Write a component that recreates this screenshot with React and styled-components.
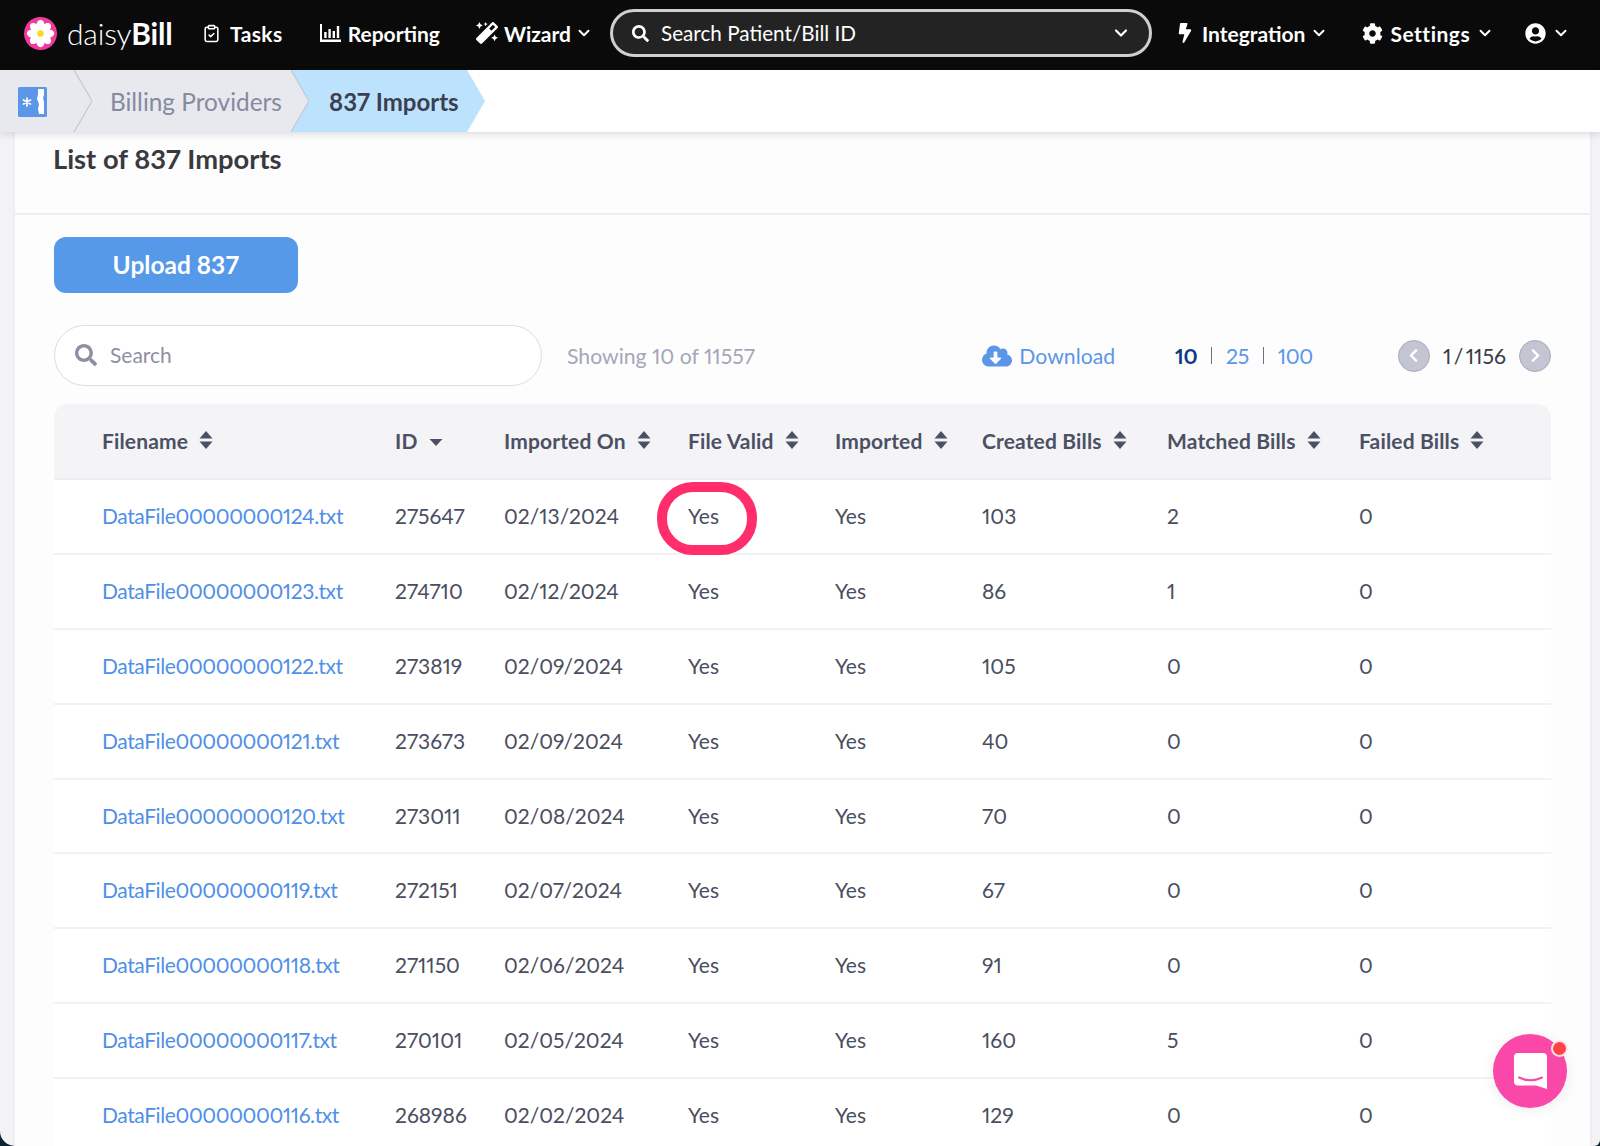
import React from "react";
import styled, { createGlobalStyle } from "styled-components";
import { FaMagic, FaBolt, FaCog, FaUserCircle, FaSearch, FaCloudDownloadAlt, FaChevronLeft, FaChevronRight } from "react-icons/fa";
import { ClipboardCheck, ChevronDown } from "lucide-react";

const Global = createGlobalStyle`
  html, body { margin: 0; padding: 0; background: #0b2332; }
  * { box-sizing: border-box; }
  body { font-family: Lato, "Liberation Sans", sans-serif; font-variant-numeric: proportional-nums; font-feature-settings: "pnum" 1; }
`;
const Shell = styled.div`
  width: 1600px; height: 1146px; overflow: hidden; display: flex; flex-direction: column;
  background: #f3f3f6; border-radius: 0 0 6px 15px;
`;
const Nav = styled.header`
  height: 70px; flex: none; background: #0a0a0a; color: #fff; display: flex; align-items: center; padding-bottom: 4px;
`;
const Logo = styled.div`
  display: flex; align-items: center; gap: 10px; margin-left: 24px; width: 179px; flex: none;
  font-size: 30px; font-weight: 300; letter-spacing: -0.2px;
  b { font-weight: 700; }
`;
const NavItem = styled.div`
  display: flex; align-items: center; font-size: 21px; font-weight: 700; flex: none;
  margin-left: ${p => p.$ml}px; gap: ${p => p.$gap ?? 8}px; letter-spacing: ${p => p.$ls ?? 0}px;
`;
const Chev = styled(ChevronDown)`
  width: 18px; height: 18px; stroke-width: 2.6; margin-left: ${p => p.$ml ?? -2}px;
`;
const SearchBox = styled.div`
  width: 542px; height: 48px; margin-left: 17px; flex: none; background: #232323; border: 3px solid #cfcfcf;
  border-radius: 24px; display: flex; align-items: center; padding: 0 18px 0 19px; font-size: 20.7px; gap: 12px;
  span { flex: 1; }
`;
const Crumbs = styled.nav`
  height: 62px; flex: none; background: #fff; display: flex; position: relative; z-index: 2;
  box-shadow: 0 2px 7px rgba(40,40,60,.16); font-size: 24.4px;
`;
const HomeCrumb = styled.div`
  width: 74px; background: #e8e9ee; padding: 17px 0 0 18px;
`;
const TextCrumb = styled.div`
  display: flex; align-items: center; background: ${p => p.$active ? "#bde2fe" : "#e8e9ee"};
  color: ${p => p.$active ? "#3b3f50" : "#858a9f"}; font-weight: ${p => p.$active ? 700 : 400};
  font-size: ${p => p.$active ? "24px" : "inherit"};
  width: ${p => p.$w}px; padding-left: ${p => p.$pl}px; white-space: nowrap;
`;
const Page = styled.main`
  flex: 1; min-height: 0; margin-left: 15px; margin-right: 10px; background: #fdfdfd;
  box-shadow: 0 0 4px rgba(40,40,60,.06);
`;
const TitleBar = styled.div`
  height: 83px; padding: 12px 39px 0 38px; border-bottom: 2px solid #eeeef0;
`;
const Title = styled.h1`
  margin: 0; font-size: 27.3px; line-height: 30px; font-weight: 700; color: #3a3a3e;
`;
const Body = styled.div`
  padding: 22px 39px 0;
`;
const Primary = styled.button`
  display: block; width: 244px; height: 56px; padding: 0 0 2px; border: 0; border-radius: 12px; background: #5599e8; color: #fff;
  font: 700 24.5px Lato, sans-serif;
`;
const Toolbar = styled.div`
  display: flex; align-items: center; margin-top: 32px; height: 61px; font-size: 21.2px;
`;
const SearchField = styled.div`
  width: 488px; height: 61px; background: #fff; border: 1.5px solid #dcdce2; border-radius: 31px;
  display: flex; align-items: center; padding: 0 0 2px 20px; gap: 13px; color: #8d90a3; font-size: 21px; flex: none;
`;
const Showing = styled.div`
  margin-left: 25px; color: #a4a7b8; flex: 1;
`;
const Download = styled.div`
  display: flex; align-items: center; gap: 7px; color: #5b96e8;
`;
const Sizes = styled.div`
  display: flex; align-items: center; margin-left: 60px; color: #5b96e8; letter-spacing: -.4px;
`;
const Size = styled.span`
  color: ${p => p.$on ? "#0c3b85" : "#5b96e8"}; font-weight: ${p => p.$on ? 700 : 400};
`;
const Bar = styled.i`
  width: 1px; height: 17px; background: #6d7080; margin: 0 14px;
`;
const Pager = styled.div`
  display: flex; align-items: center; margin-left: 85px; color: #3a3c46; gap: 13px; word-spacing: -3px;
`;
const Round = styled.div`
  width: 32px; height: 32px; border-radius: 50%; background: #c3c6d2; border: 1.5px solid #a9acba; color: #fff;
  display: flex; align-items: center; justify-content: center; font-size: 15px;
`;
const Table = styled.div`
  margin-top: 18px;
`;
const cols = "341px 109px 184px 147px 147px 185px 192px 192px";
const HeadRow = styled.div`
  display: grid; grid-template-columns: ${cols}; height: 76px; padding-bottom: 2px; align-items: center; background: #f4f4f6;
  border-radius: 14px 14px 0 0; border-bottom: 2px solid #eeeef1; color: #4c5064; font-size: 21px; font-weight: 700;
  letter-spacing: .15px;
`;
const HeadCell = styled.div`
  display: flex; align-items: center; gap: 11px;
  &:first-child { padding-left: 48px; }
`;
const Row = styled.div`
  display: grid; grid-template-columns: ${cols}; height: 74.9px; padding-bottom: 2px; align-items: center; background: #fff;
  border-bottom: 2px solid #f2f2f4; color: #4a4e60; font-size: 21px;
`;
const Cell = styled.div`
  position: relative;
  &:first-child { padding-left: 48px; }
`;
const Link = styled.a`
  color: #4f8fe8; letter-spacing: -.4px;
`;
const Ring = styled.span`
  position: absolute; left: -31px; top: -21px; width: 100px; height: 73px; border: 10px solid #ff2d6b; border-radius: 36px;
`;
const Chat = styled.div`
  position: fixed; left: 1493px; top: 1034px; width: 74px; height: 74px; border-radius: 50%; background: #f948a8;
  display: flex; align-items: center; justify-content: center; box-shadow: 0 2px 14px rgba(0,0,0,.08);
`;
const Dot = styled.span`
  position: absolute; right: -1px; top: 6px; width: 17px; height: 17px; border-radius: 50%; background: #ff4343; border: 2px solid #fbe3ee;
`;

const Flower = () => (
  <svg width="33" height="33" viewBox="0 0 33 33">
    <circle cx="16.5" cy="16.5" r="16.5" fill="#f23a9c" />
    {[0, 45, 90, 135, 180, 225, 270, 315].map(a => (
      <ellipse key={a} cx="16.5" cy="8.8" rx="4.1" ry="6" fill="#fff" transform={`rotate(${a} 16.5 16.5)`} />
    ))}
    <circle cx="16.5" cy="16.5" r="3.2" fill="#fbd91f" />
  </svg>
);
const ReportIcon = () => (
  <svg width="21" height="18" viewBox="0 0 21 18" fill="#fff">
    <path d="M0 0h2v15.5h19V18H0z" />
    <rect x="4.2" y="8" width="2.4" height="6" /><rect x="8.4" y="5" width="2.4" height="9" />
    <rect x="12.6" y="7" width="2.4" height="7" /><rect x="16.8" y="2" width="2.4" height="12" />
  </svg>
);
const HomeIcon = () => (
  <svg width="29" height="30" viewBox="0 0 29 30">
    <rect width="29" height="30" rx="1.5" fill="#5b96e8" />
    <path d="M20 2h6v6l-1 3 1 4v12h-5l-1-5 1-5-2-5 1-5z" fill="#fff" />
    <g stroke="#fff" strokeWidth="1.7" strokeLinecap="round">
      <path d="M9 11v8M5.5 13l7 4M12.500 13l-7 4" />
    </g>
  </svg>
);
const Sep = ({ back, fill, line }) => (
  <svg width="18" height="62" viewBox="0 0 18 62" style={{ flex: "none", display: "block" }}>
    <rect width="18" height="62" fill={back} />
    {fill && <polygon points="0,0 18,31 0,62" fill={fill} />}
    {line && <polyline points="0,0 18,31 0,62" fill="none" stroke={line} strokeWidth="1.2" />}
  </svg>
);
const Sort = ({ down }) => (
  <svg width="14" height="18" viewBox="0 0 14 18" fill="#4c5064" style={{ flex: "none", marginTop: down ? 8 : 0 }}>
    {!down && <path d="M7 0l6.500 7.500H.5z" />}
    <path d={down ? "M.5 4h13L7 11z" : "M.5 10.500h13L7 18z"} />
  </svg>
);
const ChatIcon = () => (
  <svg width="33" height="36" viewBox="0 0 33 36">
    <path d="M4 0h25a4 4 0 0 1 4 4v32l-11-3.500H4a4 4 0 0 1-4-4V4a4 4 0 0 1 4-4z" fill="#fff" />
    <path d="M5 24.500c7 3.600 16 3.600 23 0" stroke="#f948a8" strokeWidth="2" fill="none" strokeLinecap="round" />
  </svg>
);

const heads = [["Filename"], ["ID", true], ["Imported On"], ["File Valid"], ["Imported"], ["Created Bills"], ["Matched Bills"], ["Failed Bills"]];
const rows = [
  ["124", "275647", "02/13/2024", "103", "2"],
  ["123", "274710", "02/12/2024", "86", "1"],
  ["122", "273819", "02/09/2024", "105", "0"],
  ["121", "273673", "02/09/2024", "40", "0"],
  ["120", "273011", "02/08/2024", "70", "0"],
  ["119", "272151", "02/07/2024", "67", "0"],
  ["118", "271150", "02/06/2024", "91", "0"],
  ["117", "270101", "02/05/2024", "160", "5"],
  ["116", "268986", "02/02/2024", "129", "0"],
];

export default function App() {
  return (
    <Shell>
      <Global />
      <Nav>
        <Logo><Flower /><span>daisy<b>Bill</b></span></Logo>
        <NavItem $ml={-1} $gap={9} $ls={0.4}><ClipboardCheck size={19} strokeWidth={2} />Tasks</NavItem>
        <NavItem $ml={37} $gap={7}><ReportIcon />Reporting</NavItem>
        <NavItem $ml={36} $gap={6}><FaMagic size={22} />Wizard<Chev /></NavItem>
        <SearchBox><FaSearch size={17} /><span>Search Patient/Bill ID</span><ChevronDown size={20} strokeWidth={2.6} /></SearchBox>
        <NavItem $ml={23} $gap={7}><FaBolt size={20} />Integration<Chev /></NavItem>
        <NavItem $ml={34} $gap={7} $ls={0.5}><FaCog size={21} /><span>Settings</span><Chev $ml={-1} /></NavItem>
        <NavItem $ml={31} $gap={8}><FaUserCircle size={21} /><Chev /></NavItem>
      </Nav>
      <Crumbs>
        <HomeCrumb><HomeIcon /></HomeCrumb>
        <Sep back="#e8e9ee" line="#c6c8d0" />
        <TextCrumb $w={199} $pl={18}>Billing Providers</TextCrumb>
        <Sep back="#bde2fe" fill="#e8e9ee" line="#c6c8d0" />
        <TextCrumb $active $w={158} $pl={20}>837 Imports</TextCrumb>
        <Sep back="#fff" fill="#bde2fe" />
      </Crumbs>
      <Page>
        <TitleBar><Title>List of 837 Imports</Title></TitleBar>
        <Body>
          <Primary>Upload 837</Primary>
          <Toolbar>
            <SearchField><FaSearch size={22} />Search</SearchField>
            <Showing>Showing 10 of 11557</Showing>
            <Download><FaCloudDownloadAlt size={30} />Download</Download>
            <Sizes><Size $on>10</Size><Bar /><Size>25</Size><Bar /><Size>100</Size></Sizes>
            <Pager><Round><FaChevronLeft /></Round>1 / 1156<Round><FaChevronRight /></Round></Pager>
          </Toolbar>
          <Table>
            <HeadRow>
              {heads.map(([h, d]) => <HeadCell key={h}>{h}<Sort down={d} /></HeadCell>)}
            </HeadRow>
            {rows.map((r, i) => (
              <Row key={r[0]}>
                <Cell><Link>{`DataFile00000000${r[0]}.txt`}</Link></Cell>
                <Cell>{r[1]}</Cell>
                <Cell>{r[2]}</Cell>
                <Cell>{i === 0 && <Ring />}Yes</Cell>
                <Cell>Yes</Cell>
                <Cell>{r[3]}</Cell>
                <Cell>{r[4]}</Cell>
                <Cell>0</Cell>
              </Row>
            ))}
          </Table>
        </Body>
      </Page>
      <Chat><ChatIcon /><Dot /></Chat>
    </Shell>
  );
}
